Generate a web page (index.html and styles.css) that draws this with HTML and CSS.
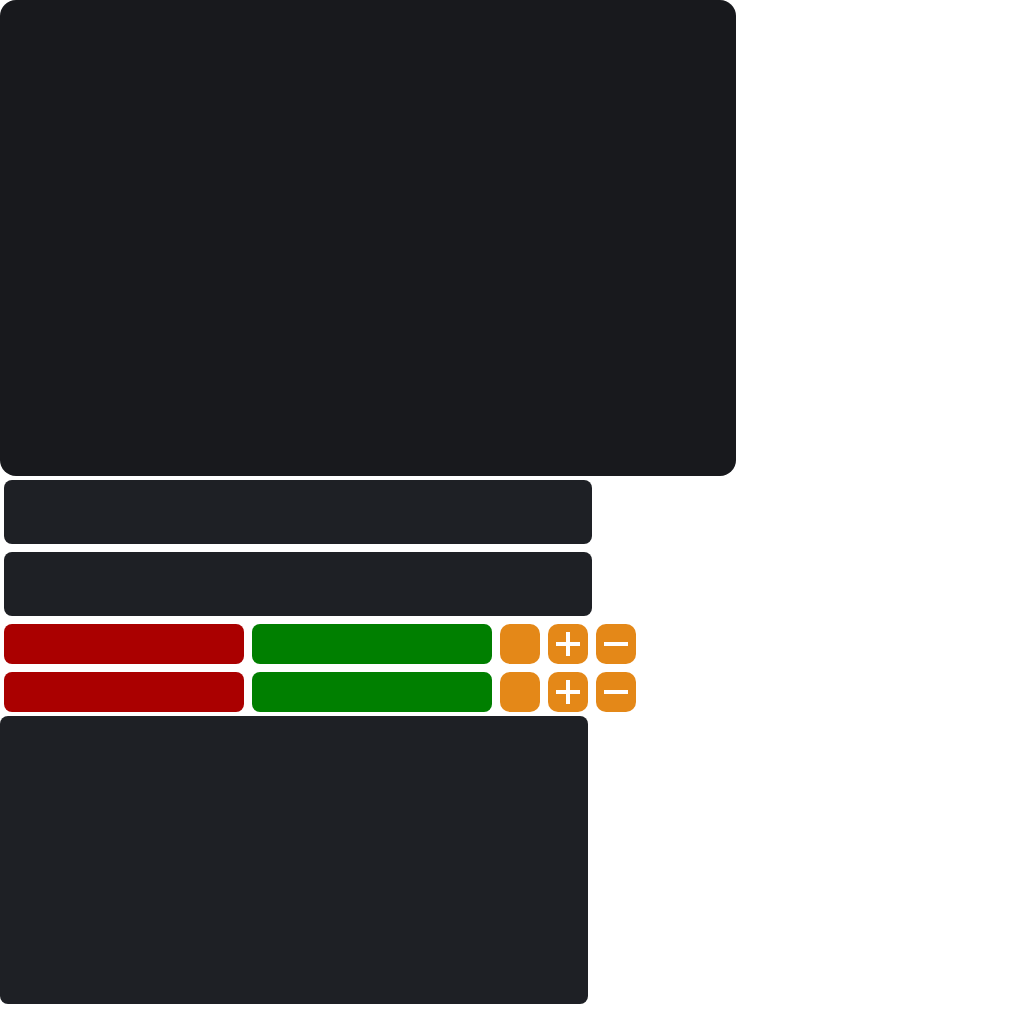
FILE: index.html
```html
<!DOCTYPE html>
<html>
<head>
<meta charset="utf-8">
<link rel="stylesheet" href="styles.css">
</head>
<body>
<div class="page">
  <div class="viewer"></div>
  <div class="controls">
    <div class="bar"></div>
    <div class="bar"></div>
    <div class="row">
      <div class="btn red"></div>
      <div class="btn green"></div>
      <div class="sq"></div>
      <div class="sq"><svg viewBox="0 0 24 24" width="24" height="24"><path d="M12 0v24M0 12h24" stroke="#fff" stroke-width="4" fill="none"/></svg></div>
      <div class="sq"><svg viewBox="0 0 24 24" width="24" height="24"><path d="M0 12h24" stroke="#fff" stroke-width="4" fill="none"/></svg></div>
    </div>
    <div class="row">
      <div class="btn red"></div>
      <div class="btn green"></div>
      <div class="sq"></div>
      <div class="sq"><svg viewBox="0 0 24 24" width="24" height="24"><path d="M12 0v24M0 12h24" stroke="#fff" stroke-width="4" fill="none"/></svg></div>
      <div class="sq"><svg viewBox="0 0 24 24" width="24" height="24"><path d="M0 12h24" stroke="#fff" stroke-width="4" fill="none"/></svg></div>
    </div>
  </div>
  <div class="log"></div>
</div>
</body>
</html>
```
FILE: styles.css
```css
html, body {
  margin: 0;
  padding: 0;
  background: #ffffff;
  font-family: "Liberation Sans", sans-serif;
}
.page {
  display: flex;
  flex-direction: column;
  align-items: flex-start;
}
.viewer {
  width: 736px;
  height: 476px;
  background: #18191d;
  border-radius: 16px;
}
.controls {
  display: flex;
  flex-direction: column;
  gap: 8px;
  padding: 4px;
}
.bar {
  width: 588px;
  height: 64px;
  background: #1e2025;
  border-radius: 8px;
}
.row {
  display: flex;
  gap: 8px;
}
.btn {
  width: 240px;
  height: 40px;
  border-radius: 8px;
}
.red { background: #aa0000; }
.green { background: #007f00; }
.sq {
  width: 40px;
  height: 40px;
  border-radius: 10px;
  background: #e48818;
  display: flex;
  align-items: center;
  justify-content: center;
}
.sq svg { display: block; }
.log {
  width: 588px;
  height: 288px;
  background: #1e2025;
  border-radius: 8px;
}
```
